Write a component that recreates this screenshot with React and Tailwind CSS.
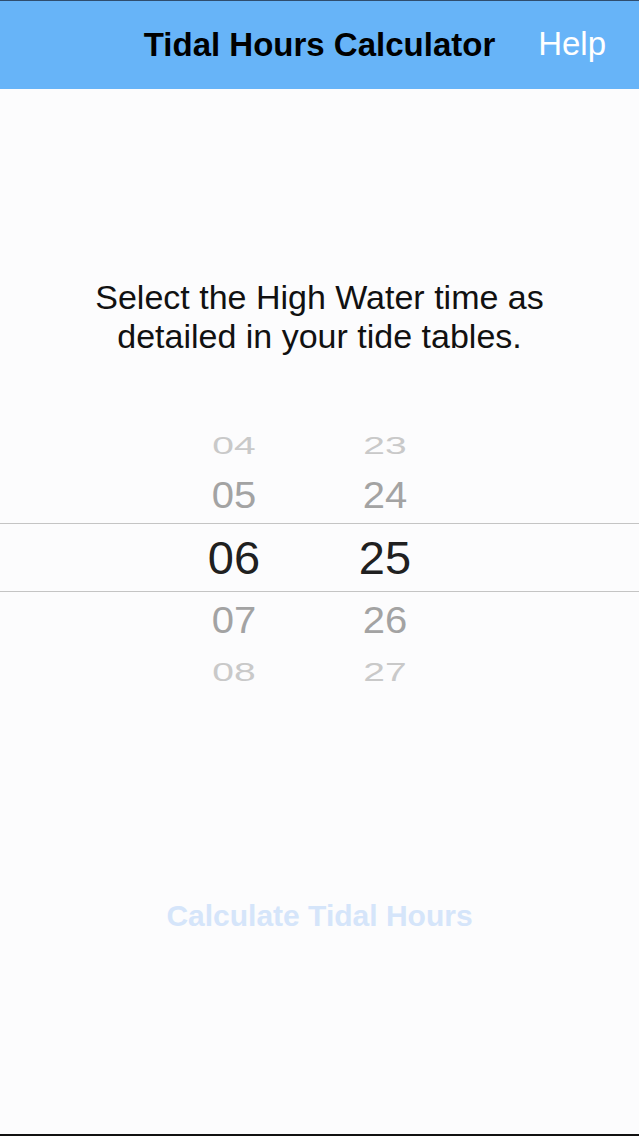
import React from 'react';

const hours = [
  { h: '04', m: '23', row: 'h-[50px]', text: 'text-[39px] text-[#c9c9c9] scale-y-[0.6]' },
  { h: '05', m: '24', row: 'h-[53px] pb-[3px]', text: 'text-[40px] text-[#a3a3a3] scale-y-[0.9]' },
];
const after = [
  { h: '07', m: '26', row: 'h-[56px]', text: 'text-[40px] text-[#a3a3a3] scale-y-[0.9]' },
  { h: '08', m: '27', row: 'h-[48px]', text: 'text-[39px] text-[#c9c9c9] scale-y-[0.65]' },
];

const PickerRow = ({ item }) => (
  <div className={`flex items-center pl-[184px] ${item.row}`}>
    <span className={`w-[100px] text-center leading-none ${item.text}`}>{item.h}</span>
    <span className={`ml-[51px] w-[100px] text-center leading-none ${item.text}`}>{item.m}</span>
  </div>
);

const App = () => {
  return (
    <div
      className="flex h-[1136px] w-[639px] flex-col bg-[#fcfcfd] border-b-2 border-[#111]"
      style={{ fontFamily: '"Liberation Sans", Arial, sans-serif' }}
    >
      {/* Nav bar */}
      <header className="relative flex h-[89px] items-center justify-center border-t border-[#2f4d6e] bg-[#67b4f8]">
        <h1 className="text-[33px] font-bold text-black">Tidal Hours Calculator</h1>
        <span className="absolute right-[33px] top-[26px] text-[33px] leading-none text-white">Help</span>
      </header>

      {/* Instructions */}
      <p className="mt-[189px] px-[40px] text-center text-[34px] leading-[39px] text-[#111]">
        Select the High Water time as
        <br />
        detailed in your tide tables.
      </p>

      {/* Time picker */}
      <div className="mt-[64px] flex flex-col">
        {hours.map(item => (
          <PickerRow key={item.h} item={item} />
        ))}
        <div className="flex h-[69px] items-center border-y border-[#c4c4c4] pl-[184px]">
          <span className="w-[100px] text-center text-[47px] leading-none text-[#202020]">06</span>
          <span className="ml-[51px] w-[100px] text-center text-[47px] leading-none text-[#202020]">25</span>
        </div>
        {after.map(item => (
          <PickerRow key={item.h} item={item} />
        ))}
      </div>

      {/* Action */}
      <button className="mt-[200px] h-[40px] text-center text-[30px] font-bold leading-[40px] text-[#d5e5fa]">
        Calculate Tidal Hours
      </button>
    </div>
  );
};

export default App;
